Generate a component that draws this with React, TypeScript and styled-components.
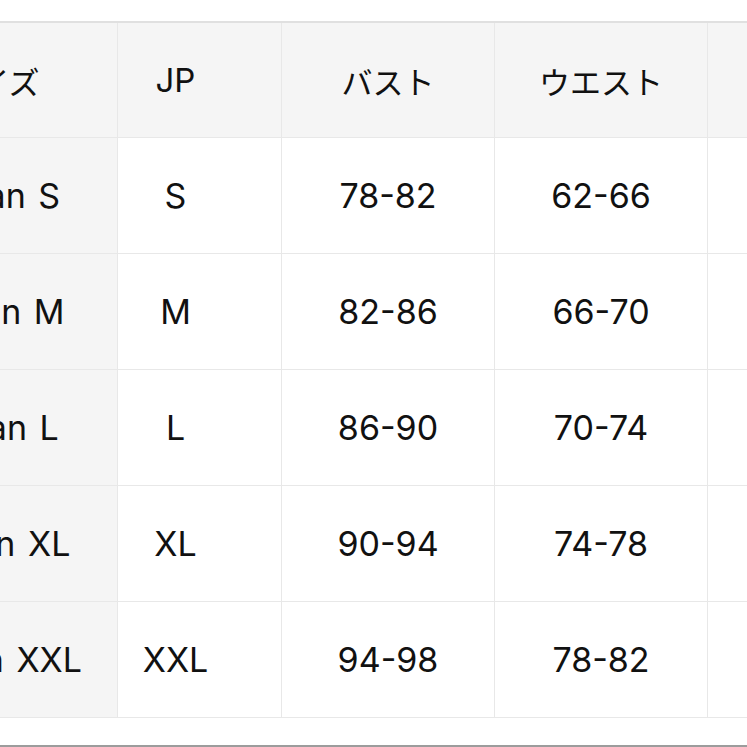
import React from "react";
import styled, { createGlobalStyle } from "styled-components";

const Global = createGlobalStyle`
  html, body { margin: 0; padding: 0; background: #ffffff; }
  body { font-family: Inter, "Noto Sans CJK JP", sans-serif; }
`;

const Page = styled.div`
  width: 747px;
  height: 747px;
  overflow: hidden;
  display: flex;
  flex-direction: column;
  padding-top: 21px;
  box-sizing: border-box;
  background: #ffffff;
`;

const Table = styled.div`
  display: grid;
  grid-template-columns: 248px 164px 213px 213px 213px;
  margin-left: -130px;
  width: 1051px;
  border-top: 2px solid #e0e0e0;
`;

const Cell = styled.div<{ $head?: boolean; $label?: boolean; $shift?: number }>`
  height: ${(p) => (p.$head ? 115 : 116)}px;
  box-sizing: border-box;
  display: flex;
  align-items: center;
  justify-content: center;
  padding-right: ${(p) => p.$shift ?? 0}px;
  border-right: 1.5px solid #e8e8e8;
  border-bottom: 1.5px solid #e8e8e8;
  background: ${(p) => (p.$head || p.$label ? "#f5f5f5" : "#ffffff")};
  font-family: Inter, "Noto Sans CJK JP", sans-serif;
  font-size: ${(p) => (p.$head ? 33 : 34)}px;
  font-weight: 400;
  word-spacing: ${(p) => (p.$label ? 3 : 0)}px;
  color: #111111;
  white-space: nowrap;
`;

const Kana = styled.span`
  font-family: "Noto Sans CJK JP", sans-serif;
  font-size: 31px;
`;

const Footer = styled.div`
  flex: 1;
  border-bottom: 2px solid #9c9c9c;
`;

const headers = ["サイズ", "JP", "バスト", "ウエスト", "ヒップ"];
const rows = [
  ["Japan S", "S", "78-82", "62-66", "86-90"],
  ["Japan M", "M", "82-86", "66-70", "90-94"],
  ["Japan L", "L", "86-90", "70-74", "94-98"],
  ["Japan XL", "XL", "90-94", "74-78", "98-102"],
  ["Japan XXL", "XXL", "94-98", "78-82", "102-106"],
];

export default function App() {
  return (
    <>
      <Global />
      <Page>
        <Table>
          {headers.map((h, i) => (
            <Cell key={h} $head $shift={i === 1 ? 48 : 0}>
              {i === 1 ? h : <Kana>{h}</Kana>}
            </Cell>
          ))}
          {rows.map((r) =>
            r.map((v, i) => (
              <Cell key={r[0] + i} $label={i === 0} $shift={i === 1 ? 48 : 0}>
                {v}
              </Cell>
            ))
          )}
        </Table>
        <Footer />
      </Page>
    </>
  );
}
